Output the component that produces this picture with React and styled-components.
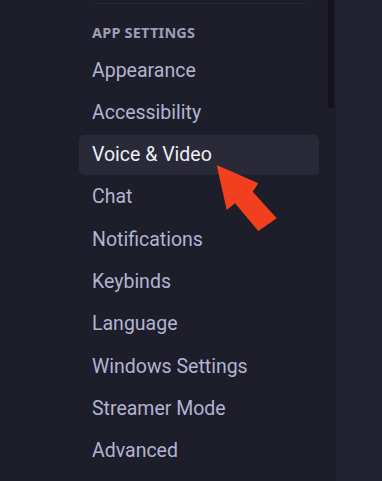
import React from "react";
import styled, { createGlobalStyle } from "styled-components";

const GlobalStyle = createGlobalStyle`
  html, body {
    margin: 0;
    padding: 0;
    background: #1e1d2a;
  }
  body {
    font-family: "Noto Sans", "Open Sans", sans-serif;
  }
`;

const items = [
  "Appearance",
  "Accessibility",
  "Voice & Video",
  "Chat",
  "Notifications",
  "Keybinds",
  "Language",
  "Windows Settings",
  "Streamer Mode",
  "Advanced",
];

const App = () => {
  return (
    <Page>
      <GlobalStyle />
      <Sidebar>
        <List>
          <Separator />
          <Header>App Settings</Header>
          {items.map((item) => (
            <Item key={item} $active={item === "Voice & Video"}>
              {item}
            </Item>
          ))}
        </List>
        <ScrollTrack>
          <Thumb />
        </ScrollTrack>
      </Sidebar>
      <Content />
      <Arrow viewBox="0 0 70 75" width="70" height="75">
        <polygon
          points="11.7,10 21.7,55 30,48.3 53.3,76 71.7,63.3 47.7,36.7 53.3,28.3"
          fill="#f2401f"
        />
      </Arrow>
    </Page>
  );
};

const Page = styled.div`
  position: relative;
  display: flex;
  width: 382px;
  height: 481px;
  overflow: hidden;
`;

const Sidebar = styled.div`
  display: flex;
  width: 336px;
  flex-shrink: 0;
  padding-left: 79px;
  box-sizing: border-box;
  background: #1e1d2a;
`;

const List = styled.div`
  width: 240px;
  display: flex;
  flex-direction: column;
`;

const Separator = styled.div`
  height: 1px;
  margin: 3px 13px 0 16px;
  background: #2a2937;
`;

const Header = styled.div`
  margin: 19px 0 0 13px;
  height: 27px;
  font-size: 14.5px;
  font-weight: 700;
  letter-spacing: 0.2px;
  text-transform: uppercase;
  color: #9d9fb8;
  line-height: 18px;
`;

const Item = styled.div`
  height: 40px;
  margin-bottom: 2.33px;
  padding-left: 13px;
  display: flex;
  align-items: center;
  border-radius: 5px;
  font-family: Roboto, "Noto Sans", sans-serif;
  font-size: 19.5px;
  font-weight: 400;
  color: ${(p) => (p.$active ? "#eceef8" : "#b1b4d2")};
  background: ${(p) => (p.$active ? "#2a2937" : "transparent")};
`;

const ScrollTrack = styled.div`
  margin-left: 9px;
  width: 6px;
`;

const Thumb = styled.div`
  height: 108px;
  border-radius: 0 0 3px 3px;
  background: #13121d;
`;

const Content = styled.div`
  flex: 1;
  background: #232230;
`;

const Arrow = styled.svg`
  position: absolute;
  left: 205px;
  top: 155px;
  overflow: visible;
`;

export default App;
